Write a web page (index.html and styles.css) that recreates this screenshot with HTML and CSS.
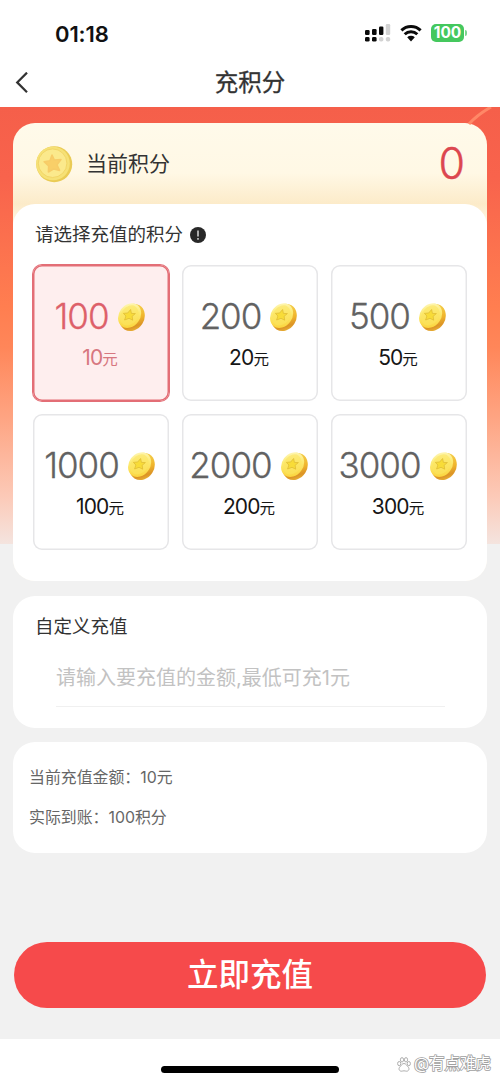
FILE: index.html
```
<!DOCTYPE html>
<html lang="zh-CN">
<head>
<meta charset="utf-8">
<title>充积分</title>
<link rel="stylesheet" href="styles.css">
</head>
<body>
<svg width="0" height="0" class="defs" aria-hidden="true">
  <defs>
    <linearGradient id="edge" x1="0" y1="0" x2="1" y2="1">
      <stop offset="0" stop-color="#f6df63"/><stop offset=".55" stop-color="#f0b52c"/><stop offset=".75" stop-color="#dc9426"/><stop offset="1" stop-color="#f7d24a"/>
    </linearGradient>
    <linearGradient id="face" x1="0" y1="0" x2=".7" y2="1">
      <stop offset="0" stop-color="#fffbd0"/><stop offset=".5" stop-color="#fcea72"/><stop offset="1" stop-color="#fbd43c"/>
    </linearGradient>
    <symbol id="coin" viewBox="0 0 28 30">
      <ellipse cx="15" cy="15.4" rx="12.2" ry="14.2" transform="rotate(32 15 15.4)" fill="url(#edge)"/>
      <ellipse cx="12.6" cy="13.6" rx="10.6" ry="13.2" transform="rotate(36 12.6 13.6)" fill="url(#face)"/>
      <ellipse cx="12.4" cy="13.4" rx="8.4" ry="10.8" transform="rotate(36 12.4 13.4)" fill="#fbe55f" opacity=".6"/>
      <path d="M13.600 7.500l.8 3.900 4 .2-3.300 2.700.6 3.900-3.700-1.900-4.400 1.700 1.300-4-2.500-2.600 4.300-.4z" fill="#f8dc38" stroke="#dfbd35" stroke-width=".8" stroke-linejoin="round"/>
    </symbol>
  </defs>
</svg>
<div class="screen">
  <header class="status">
    <span class="time">01:18</span>
    <div class="indicators">
      <svg width="26" height="18" viewBox="0 0 26 18">
        <g fill="#0b0b0b"><rect x="0" y="6" width="4.6" height="5" rx="1.2"/><rect x="7" y="5" width="4.6" height="6" rx="1.2"/><rect x="14" y="2.5" width="4.4" height="8.5" rx="1.2"/><rect x="0" y="13" width="4.6" height="4.6" rx="1.4"/><rect x="7" y="13" width="4.6" height="4.6" rx="1.4"/></g>
        <g fill="#d2d2d2"><rect x="20.8" y="0" width="4.4" height="11" rx="1.2"/><rect x="14" y="13" width="4.4" height="4.6" rx="1.8"/><rect x="20.8" y="13" width="4.4" height="4.6" rx="1.8"/></g>
      </svg>
      <svg class="wifi" width="22" height="17" viewBox="0 0 22 17">
        <path d="M1.400 5.400a13.800 13.800 0 0 1 19.200 0M4.700 9.300a9 9 0 0 1 12.600 0" fill="none" stroke="#0b0b0b" stroke-width="3"/>
        <path d="M7.200 12.300a5.600 5.600 0 0 1 7.600 0L11 16.400z" fill="#0b0b0b"/>
      </svg>
      <div class="battery"><span class="level">100</span><i class="tip"></i></div>
    </div>
  </header>
  <nav class="nav">
    <svg class="back" width="14" height="22" viewBox="0 0 14 22"><path d="M12 .6L2.200 10.400 12 20.200" fill="none" stroke="#333" stroke-width="2.200"/></svg>
    <h1 class="title">充积分</h1>
  </nav>
  <main class="content">
    <svg class="streak" width="40" height="20" viewBox="0 0 40 20"><path d="M5 17Q13 8 27 0" fill="none" stroke="#ff8867" stroke-width="3"/></svg>
    <section class="card balance">
      <div class="balance-head">
        <svg class="medal" width="38" height="38" viewBox="0 0 38 38">
          <circle cx="19.2" cy="19.2" r="18" fill="#eacb55"/>
          <circle cx="18" cy="18.5" r="16.8" fill="#f6e176"/>
          <circle cx="17.6" cy="18.2" r="14.3" fill="#fbe98c" stroke="#f2d566" stroke-width="1"/>
          <path d="M17 10l2.400 5 6.600-.4-4 5.200 2.600 5.600-5.800-1.500-5.400 3.100.2-6.100-4.500-4.100 5.800-1z" fill="#f9cf68" stroke="#f7cc68" stroke-width="1.500" stroke-linejoin="round"/>
        </svg>
        <span class="balance-label">当前积分</span>
        <span class="balance-value">0</span>
      </div>
      <div class="picker">
        <h2 class="picker-title">请选择充值的积分
          <svg width="16" height="16" viewBox="0 0 16 16"><circle cx="8" cy="8" r="8" fill="#282828"/><path d="M8 3.400v6.200M8 11v1.700" stroke="#d8d8d8" stroke-width="1.500"/></svg>
        </h2>
        <div class="grid">
          <button class="tile selected"><span class="points">100<svg class="coin"><use href="#coin"/></svg></span><span class="price">10<small>元</small></span></button>
          <button class="tile"><span class="points">200<svg class="coin"><use href="#coin"/></svg></span><span class="price">20<small>元</small></span></button>
          <button class="tile"><span class="points">500<svg class="coin"><use href="#coin"/></svg></span><span class="price">50<small>元</small></span></button>
          <button class="tile"><span class="points">1000<svg class="coin"><use href="#coin"/></svg></span><span class="price">100<small>元</small></span></button>
          <button class="tile"><span class="points">2000<svg class="coin"><use href="#coin"/></svg></span><span class="price">200<small>元</small></span></button>
          <button class="tile"><span class="points">3000<svg class="coin"><use href="#coin"/></svg></span><span class="price">300<small>元</small></span></button>
        </div>
      </div>
    </section>
    <section class="card custom">
      <h2 class="custom-title">自定义充值</h2>
      <div class="field">请输入要充值的金额,最低可充1元</div>
    </section>
    <section class="card summary">
      <p class="row">当前充值金额：10元</p>
      <p class="row">实际到账：100积分</p>
    </section>
    <button class="submit">立即充值</button>
  </main>
  <footer class="footer">
    <div class="home"></div>
    <div class="mark">
      <svg width="14" height="15" viewBox="0 0 14 15" fill="#fff" stroke="#a5a5a5" stroke-width=".9"><ellipse cx="2.2" cy="6.6" rx="1.6" ry="2.1"/><ellipse cx="5" cy="2.8" rx="1.6" ry="2.2"/><ellipse cx="9" cy="2.8" rx="1.6" ry="2.2"/><ellipse cx="11.8" cy="6.6" rx="1.6" ry="2.1"/><path d="M7 6.500c2 0 2.600 2 4 3.300 2 2 .6 4.400-1.300 4.400-1.100 0-1.700-.4-2.700-.4s-1.600.4-2.700.4c-1.900 0-3.300-2.400-1.300-4.400C4.400 8.500 5 6.500 7 6.500z"/></svg>
      <span class="mark-text">@有点难虎</span>
    </div>
  </footer>
</div>
</body>
</html>
```
FILE: styles.css
```
* { box-sizing: border-box; }
body { margin: 0; font-family: Inter, "Noto Sans CJK SC", sans-serif; color: #333; background: #fff; }
h1, h2, p { margin: 0; font-weight: 400; }
button { border: 0; padding: 0; font: inherit; color: inherit; }
svg { display: block; flex: none; }
.defs { position: absolute; }
.screen { width: 500px; height: 1083px; display: flex; flex-direction: column; overflow: hidden; }

.status { height: 58px; padding: 10px 33px 0 55px; display: flex; justify-content: space-between; align-items: center; }
.time { font-size: 22px; font-weight: 600; letter-spacing: -.1px; line-height: 26px; color: #111; }
.indicators { display: flex; align-items: center; margin-top: -2px; }
.wifi { margin: 0 9px; }
.battery { display: flex; align-items: center; gap: 1px; }
.level { width: 33px; height: 18px; border-radius: 5px; background: #45c85e; color: #fff; font-size: 15.5px; font-weight: 700; line-height: 18px; text-align: center; }
.tip { width: 2px; height: 6px; border-radius: 0 2px 2px 0; background: #7dd58f; }

.nav { height: 49px; padding: 0 15px; display: grid; grid-template-columns: 14px 1fr 14px; align-items: center; }
.title { font-size: 23.5px; line-height: 48px; font-weight: 400; text-align: center; -webkit-text-stroke: .3px #333; }

.content { position: relative; height: 932px; padding: 16px 13px 0; background: linear-gradient(#f55f4a 0, #f8634c 70px, #ff7e50 200px, #ff8659 240px, #fea482 310px, #fccab8 390px, #f4e4df 437px, #f1f1f1 437px); }
.streak { position: absolute; top: 0; right: -4px; }
.card { border-radius: 22px; background: #fff; }
.balance { height: 458px; background: linear-gradient(#fffaea 0, #fff8e5 50px, #fcebc9 81px, #fff9ed 105px); overflow: hidden; }
.balance-head { height: 81px; padding: 0 22px; display: flex; align-items: center; }
.balance-label { flex: 1; margin-left: 13px; font-size: 21px; line-height: 30px; }
.balance-value { font-size: 43px; line-height: 50px; margin-top: -2px; font-weight: 300; color: #dc474f; -webkit-text-stroke: .4px #dc474f; }
.picker { height: 377px; padding: 17px 20px 0; border-radius: 22px 22px 0 0; background: #fff; }
.picker-title { height: 27px; margin-left: 2px; display: flex; align-items: center; gap: 7px; font-size: 18.5px; line-height: 27px; }
.grid { margin-top: 17px; display: grid; grid-template-columns: repeat(3, 136px); grid-auto-rows: 136px; gap: 13px; }
.tile { display: flex; flex-direction: column; align-items: center; padding-top: 30px; border-radius: 9px; background: #fff; box-shadow: inset 0 0 0 1.5px #e6e6e8; }
.selected { background: #feeeee; box-shadow: inset 0 0 0 1.5px #e36e76, 0 0 0 1px #e36e76; }
.points { height: 42px; margin-left: -3px; display: flex; align-items: center; gap: 8px; font-size: 35px; line-height: 42px; font-weight: 300; letter-spacing: -1px; color: #626262; -webkit-text-stroke: .3px currentColor; }
.coin { width: 28px; height: 30px; margin-top: 2px; }
.price { margin: 8px 0 0 -2px; font-size: 21px; line-height: 26px; letter-spacing: -.9px; color: #161616; }
.price small { font-size: 15.5px; letter-spacing: 0; }
.selected .points { color: #dd6069; }
.selected .price { color: #d7777f; }

.custom { height: 132px; margin-top: 15px; padding: 16px 42px 0 22px; }
.custom-title { font-size: 18.5px; line-height: 28px; }
.field { height: 51px; margin: 16px 0 0 21px; font-size: 20px; line-height: 44px; color: #c2c2c2; border-bottom: 1px solid #f0f0f0; white-space: nowrap; }
.summary { height: 111px; margin-top: 14px; padding: 16px; }
.row { font-size: 15.9px; line-height: 40px; color: #666; }
.submit { display: block; width: 472px; height: 66px; margin: 89px 0 0 1px; border-radius: 33px; background: #f64a4b; color: #fff; font-size: 31.5px; font-weight: 500; line-height: 66px; text-align: center; }

.footer { position: relative; height: 44px; background: #fff; display: flex; justify-content: center; padding-top: 27px; }
.home { width: 178px; height: 7px; border-radius: 4px; background: #000; }
.mark { position: absolute; top: 14px; right: 9px; display: flex; align-items: center; gap: 3px; }
.mark-text { font-size: 15.5px; line-height: 22px; color: #fff; -webkit-text-stroke: 1.6px #a0a0a0; paint-order: stroke fill; white-space: nowrap; }
```
